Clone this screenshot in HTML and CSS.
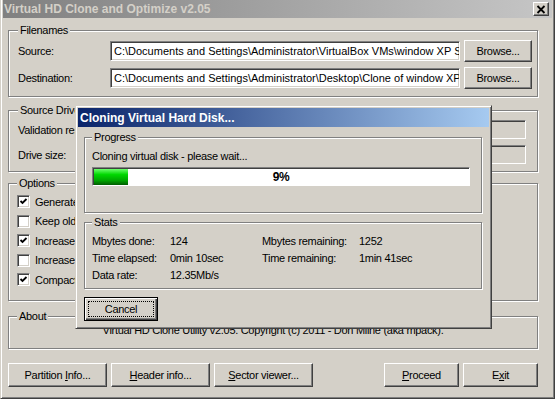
FILE: index.html
```
<!DOCTYPE html>
<html>
<head>
	<title>Virtual HD Clone and Optimize v2.05</title>
	<link rel="stylesheet" href="styles.css">
</head>
<body>
	<div class="window">
		<div class="caption">
			<span>Virtual HD Clone and Optimize v2.05</span>
			<span class="close_btn"><svg width="10" height="9" viewBox="0 0 10 9"><path d="M1.5 1 L8.5 8 M8.5 1 L1.5 8" stroke="#000" stroke-width="1.8" fill="none"/></svg></span>
		</div>
		<div class="client">
			<fieldset class="group files">
				<legend>Filenames</legend>
				<div class="file_grid">
					<span>Source:</span>
					<div class="edit">C:\Documents and Settings\Administrator\VirtualBox VMs\window XP SP3\window XP SP3.vdi</div>
					<div class="btn">Browse...</div>
					<span>Destination:</span>
					<div class="edit">C:\Documents and Settings\Administrator\Desktop\Clone of window XP SP3.vdi</div>
					<div class="btn">Browse...</div>
				</div>
			</fieldset>
			<fieldset class="group drive">
				<legend>Source Drive</legend>
				<div class="drive_grid">
					<span>Validation result:</span>
					<div class="edit readonly"></div>
					<span>Drive size:</span>
					<div class="edit readonly"></div>
				</div>
			</fieldset>
			<fieldset class="group options">
				<legend>Options</legend>
				<div class="check_row"><span class="check on"><svg width="11" height="11" viewBox="0 0 11 11"><path d="M2.5 5 L4.5 7 L8.5 3" stroke="#000" stroke-width="1.8" fill="none"/></svg></span>Generate new UUID</div>
				<div class="check_row"><span class="check"></span>Keep old UUID</div>
				<div class="check_row"><span class="check on"><svg width="11" height="11" viewBox="0 0 11 11"><path d="M2.5 5 L4.5 7 L8.5 3" stroke="#000" stroke-width="1.8" fill="none"/></svg></span>Increase partition size</div>
				<div class="check_row"><span class="check"></span>Increase virtual drive size to</div>
				<div class="check_row"><span class="check on"><svg width="11" height="11" viewBox="0 0 11 11"><path d="M2.5 5 L4.5 7 L8.5 3" stroke="#000" stroke-width="1.8" fill="none"/></svg></span>Compact drive while copying</div>
			</fieldset>
			<fieldset class="group about">
				<legend>About</legend>
				<div class="about_text">Virtual HD Clone Utility v2.05. Copyright (c) 2011 - Don Milne (aka mpack).</div>
			</fieldset>
			<div class="button_row">
				<div class="btn wide"><span>Partition <u>I</u>nfo...</span></div>
				<div class="btn wide"><span><u>H</u>eader info...</span></div>
				<div class="btn wide"><span><u>S</u>ector viewer...</span></div>
				<div class="spacer"></div>
				<div class="btn narrow"><span><u>P</u>roceed</span></div>
				<div class="btn narrow"><span>E<u>x</u>it</span></div>
			</div>
		</div>

		<div class="dialog">
			<div class="caption active">Cloning Virtual Hard Disk...</div>
			<div class="dialog_body">
				<fieldset class="group progress">
					<legend>Progress</legend>
					<div class="status">Cloning virtual disk - please wait...</div>
					<div class="bar">
						<div class="bar_fill" style="width: 9%"></div>
						<span class="bar_text">9%</span>
					</div>
				</fieldset>
				<fieldset class="group stats">
					<legend>Stats</legend>
					<div class="stats_grid">
						<span>Mbytes done:</span><span>124</span>
						<span>Mbytes remaining:</span><span>1252</span>
						<span>Time elapsed:</span><span>0min 10sec</span>
						<span>Time remaining:</span><span>1min 41sec</span>
						<span>Data rate:</span><span>12.35Mb/s</span>
						<span></span><span></span>
					</div>
				</fieldset>
				<div class="btn default"><span class="focus">Cancel</span></div>
			</div>
		</div>
	</div>
</body>
</html>
```

FILE: styles.css
```
body{
	margin: 0;
	font: 11px "Liberation Sans", Arial, sans-serif;
	letter-spacing: -0.3px;
	color: #000;
	background: #d4d0c8;
}
.window{
	position: relative;
	width: 555px;
	height: 399px;
	box-sizing: border-box;
	background: #d4d0c8;
	border-left: 1px solid #d4d0c8;
	border-right: 1px solid #404040;
	border-bottom: 1px solid #404040;
	padding: 0 2px 2px 2px;
	box-shadow: inset 1px 0 #fff, inset -1px -1px #808080;
	overflow: hidden;
}
.caption{
	height: 18px;
	display: flex;
	align-items: center;
	justify-content: space-between;
	padding: 0 2px 0 1px;
	background: linear-gradient(to right, #808080, #c6c6c6);
	color: #d4d0c8;
	font-weight: bold;
	font-size: 12px;
	letter-spacing: 0;
}
.close_btn{
	width: 16px;
	height: 14px;
	box-sizing: border-box;
	margin-right: 1px;
	background: #d4d0c8;
	border: 1px solid;
	border-color: #fff #404040 #404040 #fff;
	box-shadow: inset -1px -1px #808080;
	display: flex;
	align-items: center;
	justify-content: center;
}
.client{
	padding: 6px 14px 0 5px;
}
.group{
	margin: 0;
	min-width: 0;
	border: 1px solid #808080;
	box-shadow: inset 1px 1px #fff, 1px 1px #fff;
}
.group legend{
	padding: 0 2px;
	line-height: 13px;
	background: #d4d0c8;
}
.files{
	padding: 3px 5px 7px 9px;
}
.file_grid{
	display: grid;
	grid-template-columns: 88px 350px 68px;
	column-gap: 4px;
	row-gap: 5px;
	align-items: center;
}
.edit{
	height: 20px;
	box-sizing: border-box;
	background: #fff;
	border: 1px solid;
	border-color: #808080 #fff #fff #808080;
	box-shadow: inset 1px 1px #404040, inset -1px -1px #d4d0c8;
	padding: 0 3px;
	line-height: 18px;
	letter-spacing: 0;
	white-space: nowrap;
	overflow: hidden;
}
.edit.readonly{
	height: 19px;
	background: #d4d0c8;
}
.btn{
	height: 22px;
	box-sizing: border-box;
	background: #d4d0c8;
	border: 1px solid;
	border-color: #fff #404040 #404040 #fff;
	box-shadow: inset -1px -1px #808080;
	display: flex;
	align-items: center;
	justify-content: center;
}
.drive{
	margin-top: 7px;
	padding: 3px 11px 7px 9px;
}
.drive_grid{
	display: grid;
	grid-template-columns: 92px 1fr;
	row-gap: 6px;
	align-items: center;
}
.options{
	margin-top: 5px;
	padding: 2px 8px 10px 8px;
}
.check_row{
	height: 19.5px;
	display: flex;
	align-items: center;
	gap: 5px;
	white-space: nowrap;
}
.check{
	width: 13px;
	height: 13px;
	box-sizing: border-box;
	background: #fff;
	border: 1px solid;
	border-color: #808080 #fff #fff #808080;
	box-shadow: inset 1px 1px #404040, inset -1px -1px #d4d0c8;
	display: flex;
	align-items: center;
	justify-content: center;
}
.about{
	margin-top: 9px;
	padding: 1px 8px 12px 8px;
}
.about_text{
	line-height: 12px;
	text-align: center;
}
.button_row{
	margin-top: 14px;
	display: flex;
	gap: 4px;
}
.button_row .btn{
	height: 24px;
}
.btn.wide{
	width: 99px;
}
.btn.narrow{
	width: 75px;
}
.spacer{
	flex: 1;
}
.dialog{
	position: absolute;
	left: 74px;
	top: 105px;
	width: 417px;
	height: 224px;
	box-sizing: border-box;
	background: #d4d0c8;
	border: 1px solid;
	border-color: #d4d0c8 #404040 #404040 #d4d0c8;
	box-shadow: inset 1px 1px #fff, inset -1px -1px #808080;
	padding: 2px;
}
.caption.active{
	height: 19px;
	padding-left: 2px;
	justify-content: flex-start;
	background: linear-gradient(to right, #0a246a, #a6caf0);
	color: #fff;
}
.dialog_body{
	padding: 4px 7px 4px 6px;
}
.progress{
	padding: 6px 11px 26px 7px;
}
.status{
	line-height: 12px;
}
.bar{
	position: relative;
	margin-top: 5px;
	height: 19px;
	box-sizing: border-box;
	background: #fff;
	border: 1px solid;
	border-color: #808080 #fff #fff #808080;
	box-shadow: inset 1px 1px #404040;
	padding: 1px 0 0 1px;
}
.bar_fill{
	height: 100%;
	background: linear-gradient(#6cff6c, #00d800 35%, #00a800 70%, #005c00);
}
.bar_text{
	position: absolute;
	left: 0;
	right: 0;
	top: 2px;
	text-align: center;
	font-weight: bold;
	font-size: 12px;
}
.stats{
	margin-top: 3px;
	padding: 3px 11px 5px 7px;
}
.stats_grid{
	display: grid;
	grid-template-columns: 78px 92px 97px 1fr;
	grid-auto-rows: 17px;
	align-items: center;
}
.btn.default{
	margin-top: 8px;
	width: 74px;
	height: 24px;
	border: 1px solid #000;
	box-shadow: inset 1px 1px #fff, inset -1px -1px #404040, inset -2px -2px #808080;
	padding: 3px;
}
.focus{
	flex: 1;
	align-self: stretch;
	display: flex;
	align-items: center;
	justify-content: center;
	border: 1px dotted #000;
}
```
